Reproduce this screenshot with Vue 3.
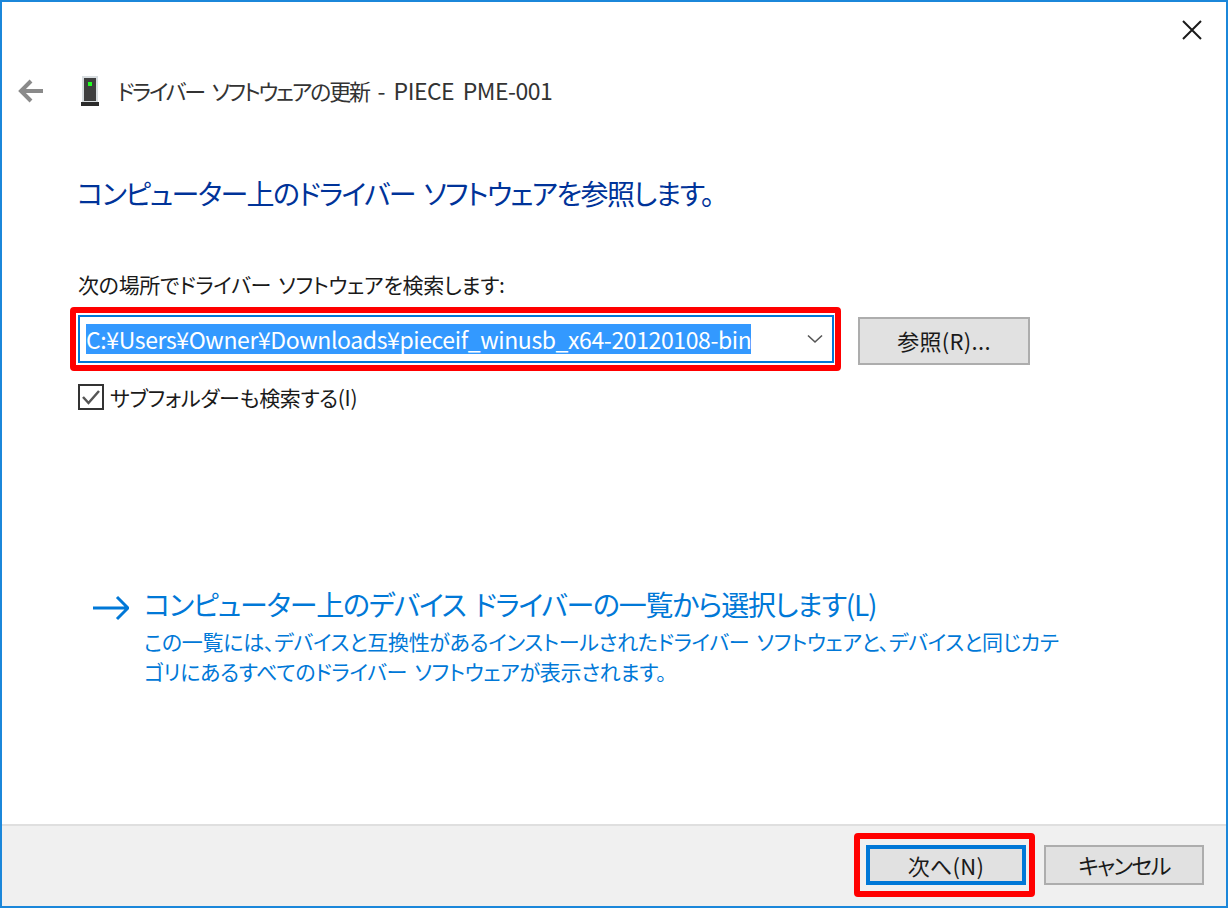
<script setup>
const heading = 'コンピューター上のドライバー ソフトウェアを参照します。'
const path = 'C:¥Users¥Owner¥Downloads¥pieceif_winusb_x64-20120108-bin'
</script>

<template>
  <div class="window">
    <div class="closebar">
      <svg class="close" width="20" height="20" viewBox="0 0 20 20"><path d="M1 1 L19 19 M19 1 L1 19" stroke="#1a1a1a" stroke-width="2" fill="none"/></svg>
    </div>
    <div class="titlerow">
      <svg class="back" width="26" height="24" viewBox="0 0 26 24"><path d="M25 12 H3 M13 2 L3 12 L13 22" stroke="#8a8a8a" stroke-width="4" fill="none"/></svg>
      <svg class="device" width="18" height="30" viewBox="0 0 18 30">
        <rect x="1" y="0" width="16" height="27" fill="#d8dde0"/>
        <rect x="3" y="2" width="12" height="23" fill="#3f3f3f"/>
        <rect x="7" y="6" width="4" height="4" fill="#22ff22"/>
        <rect x="0" y="26" width="18" height="4" fill="#2b2b2b"/>
      </svg>
      <span class="title"><span class="title-jp">ドライバー ソフトウェアの更新</span><span class="title-en"> - PIECE PME-001</span></span>
    </div>
    <div class="content">
      <h1 class="heading">{{ heading }}</h1>
      <div class="label">次の場所でドライバー ソフトウェアを検索します:</div>
      <div class="pathrow">
        <div class="combo">
          <span class="selected">{{ path }}</span>
          <svg class="chev" width="18" height="10" viewBox="0 0 18 10"><path d="M2 1.500 L9 8 L16 1.500" stroke="#555" stroke-width="1.6" fill="none"/></svg>
          <div class="redbox"></div>
        </div>
        <button class="btn browse">参照(R)...</button>
      </div>
      <div class="checkrow">
        <svg class="check" width="26" height="26" viewBox="0 0 26 26">
          <rect x="1" y="1" width="24" height="24" fill="#fff" stroke="#333" stroke-width="2"/>
          <path d="M5 13 L10.500 19 L21 7" stroke="#555" stroke-width="2.500" fill="none"/>
        </svg>
        <span class="checklabel">サブフォルダーも検索する(I)</span>
      </div>
      <div class="linkblock">
        <svg class="arrow" width="36" height="26" viewBox="0 0 36 26"><path d="M0 13 H34 M24 2 L35 13 L24 24" stroke="#0078d7" stroke-width="3" fill="none"/></svg>
        <div class="linktext">
          <div class="linktitle">コンピューター上のデバイス ドライバーの一覧から選択します(L)</div>
          <div class="linkdesc">この一覧には、デバイスと互換性があるインストールされたドライバー ソフトウェアと、デバイスと同じカテ<br>ゴリにあるすべてのドライバー ソフトウェアが表示されます。</div>
        </div>
      </div>
    </div>
    <div class="footer">
      <button class="btn next">次へ(N)<span class="redbox2"></span></button>
      <button class="btn cancel">キャンセル</button>
    </div>
  </div>
</template>

<style scoped>
.window {
  box-sizing: border-box;
  width: 1228px;
  height: 908px;
  border: 2px solid #1b87da;
  background: #fff;
  display: flex;
  flex-direction: column;
  font-family: "Noto Sans CJK JP", "Noto Sans", sans-serif;
  font-feature-settings: "palt";
  color: #1a1a1a;
  overflow: hidden;
}
.closebar {
  height: 56px;
  display: flex;
  justify-content: flex-end;
  align-items: flex-start;
  padding: 18px 24px 0 0;
  box-sizing: border-box;
}
.titlerow {
  height: 66px;
  display: flex;
  align-items: center;
  padding-left: 16px;
}
.back { margin-right: 37px; }
.device { margin-right: 18px; }
.title {
  font-size: 23px;
  color: #333;
  white-space: pre;
  line-height: 30px;
  margin-top: -2px;
}
.title-jp { font-size: 22px; letter-spacing: -2.2px; word-spacing: 5px; }
.title-en { letter-spacing: -0.5px; word-spacing: 4px; }
.content {
  flex: 1;
  padding: 0 0 0 75px;
  display: flex;
  flex-direction: column;
}
.heading {
  margin: 49px 0 0;
  font-size: 28px;
  line-height: 40px;
  font-weight: 400;
  letter-spacing: -1.6px;
  word-spacing: 4px;
  color: #003399;
  white-space: pre;
}
.label {
  margin-top: 56px;
  margin-left: 1px;
  font-size: 21px;
  line-height: 30px;
  letter-spacing: -0.3px;
  word-spacing: 3px;
  white-space: pre;
}
.pathrow {
  margin-top: 16px;
  margin-left: 1px;
  display: flex;
  align-items: flex-start;
}
.combo {
  position: relative;
  box-sizing: border-box;
  width: 756px;
  height: 48px;
  border: 2px solid #0078d7;
  padding: 4px 6px;
  display: flex;
  align-items: center;
  justify-content: space-between;
  background: #fff;
}
.selected {
  background: #3399ff;
  color: #fff;
  font-size: 23px;
  line-height: 30px;
  height: 30px;
  letter-spacing: -0.39px;
  white-space: pre;
}
.chev { margin-right: 2px; }
.redbox {
  position: absolute;
  left: -10px;
  top: -10px;
  right: -9px;
  bottom: -10px;
  border: 6px solid #ff0000;
  border-radius: 4px;
  pointer-events: none;
}
.btn {
  box-sizing: border-box;
  height: 48px;
  background: #e1e1e1;
  border: 2px solid #adadad;
  font-family: inherit;
  font-feature-settings: "palt";
  font-size: 22px;
  color: #1a1a1a;
  padding: 0 0 3px;
  letter-spacing: 0.3px;
}
.browse {
  width: 172px;
  margin-left: 24px;
  margin-top: 2px;
}
.checkrow {
  margin-top: 19px;
  margin-left: 1px;
  display: flex;
  align-items: center;
  gap: 6px;
}
.checklabel {
  font-size: 21px;
  line-height: 26px;
  letter-spacing: -0.3px;
  white-space: pre;
}
.linkblock {
  margin-top: 174px;
  display: flex;
  align-items: flex-start;
  margin-left: 16px;
  gap: 15px;
}
.arrow { margin-top: 11px; }
.linktitle {
  font-size: 28px;
  line-height: 40px;
  letter-spacing: -1.23px;
  word-spacing: 4px;
  color: #0078d7;
  white-space: pre;
}
.linkdesc {
  margin-top: 2px;
  font-size: 21px;
  line-height: 30px;
  letter-spacing: -0.3px;
  word-spacing: 3px;
  color: #0078d7;
  white-space: pre;
}
.footer {
  height: 82px;
  box-sizing: border-box;
  background: #f0f0f0;
  border-top: 2px solid #dfdfdf;
  display: flex;
  justify-content: flex-end;
  align-items: flex-start;
  padding: 19px 22px 0 0;
  gap: 18px;
}
.next {
  position: relative;
  width: 160px;
  height: 40px;
  border: 4px solid #0078d7;
}
.cancel {
  width: 160px;
  height: 40px;
  letter-spacing: -1.6px;
}
.redbox2 {
  position: absolute;
  left: -16px;
  top: -16px;
  right: -13px;
  bottom: -16px;
  border: 6px solid #ff0000;
  border-radius: 4px;
  pointer-events: none;
}
</style>
